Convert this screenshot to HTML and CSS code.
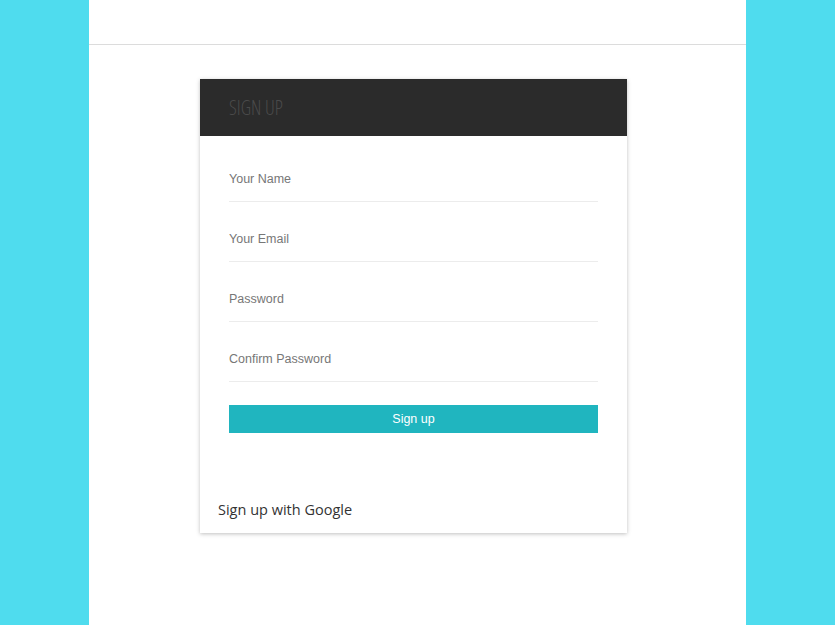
FILE: index.html
```html
<!DOCTYPE html>
<html>
<head>
<meta charset="utf-8">
<link rel="stylesheet" href="styles.css">
</head>
<body>
<div class="page">
  <div class="topbar"></div>
  <div class="card">
    <div class="card-head"><h2 class="card-title">SIGN UP</h2></div>
    <form class="form">
      <input class="field" type="text" placeholder="Your Name">
      <input class="field" type="email" placeholder="Your Email">
      <input class="field" type="password" placeholder="Password">
      <input class="field" type="password" placeholder="Confirm Password">
      <button class="btn" type="button">Sign up</button>
    </form>
    <div class="social">Sign up with Google</div>
  </div>
</div>
</body>
</html>
```

FILE: styles.css
```css
html, body {
  margin: 0;
  padding: 0;
  height: 100%;
}
body {
  background: #4fdcee;
  font-family: "Liberation Sans", Arial, sans-serif;
}
.page {
  width: 657px;
  margin-left: 89px;
  min-height: 100%;
  background: #fff;
  display: flex;
  flex-direction: column;
  align-items: flex-start;
}
.topbar {
  align-self: stretch;
  height: 44px;
  border-bottom: 1px solid #dcdcdc;
}
.card {
  width: 427px;
  margin-top: 34px;
  margin-left: 111px;
  background: #fff;
  box-shadow: 0 1px 4px rgba(0,0,0,0.25);
}
.card-head {
  height: 57px;
  background: #2b2b2b;
  display: flex;
  align-items: center;
  padding-left: 29px;
}
.card-title {
  margin: 0;
  font-family: "Open Sans", sans-serif;
  font-stretch: 75%;
  font-weight: 300;
  font-size: 19.5px;
  color: #4a4a4a;
  letter-spacing: 0;
}
.form {
  display: flex;
  flex-direction: column;
  padding: 6px 29px 0 29px;
}
.field {
  height: 60px;
  box-sizing: border-box;
  border: none;
  border-bottom: 1px solid #ececec;
  padding: 14px 0 0 0;
  font-family: "Liberation Sans", Arial, sans-serif;
  font-size: 12.5px;
  outline: none;
  background: transparent;
}
.field::placeholder {
  color: #777;
}
.btn {
  margin-top: 23px;
  height: 28px;
  border: none;
  background: #20b5bf;
  color: #fff;
  font-family: "Liberation Sans", Arial, sans-serif;
  font-size: 12.5px;
  padding: 0;
}
.social {
  margin-top: 66px;
  padding: 0 0 12px 18px;
  font-family: "Open Sans", sans-serif;
  font-size: 14.5px;
  line-height: 22px;
  color: #333;
}
```
